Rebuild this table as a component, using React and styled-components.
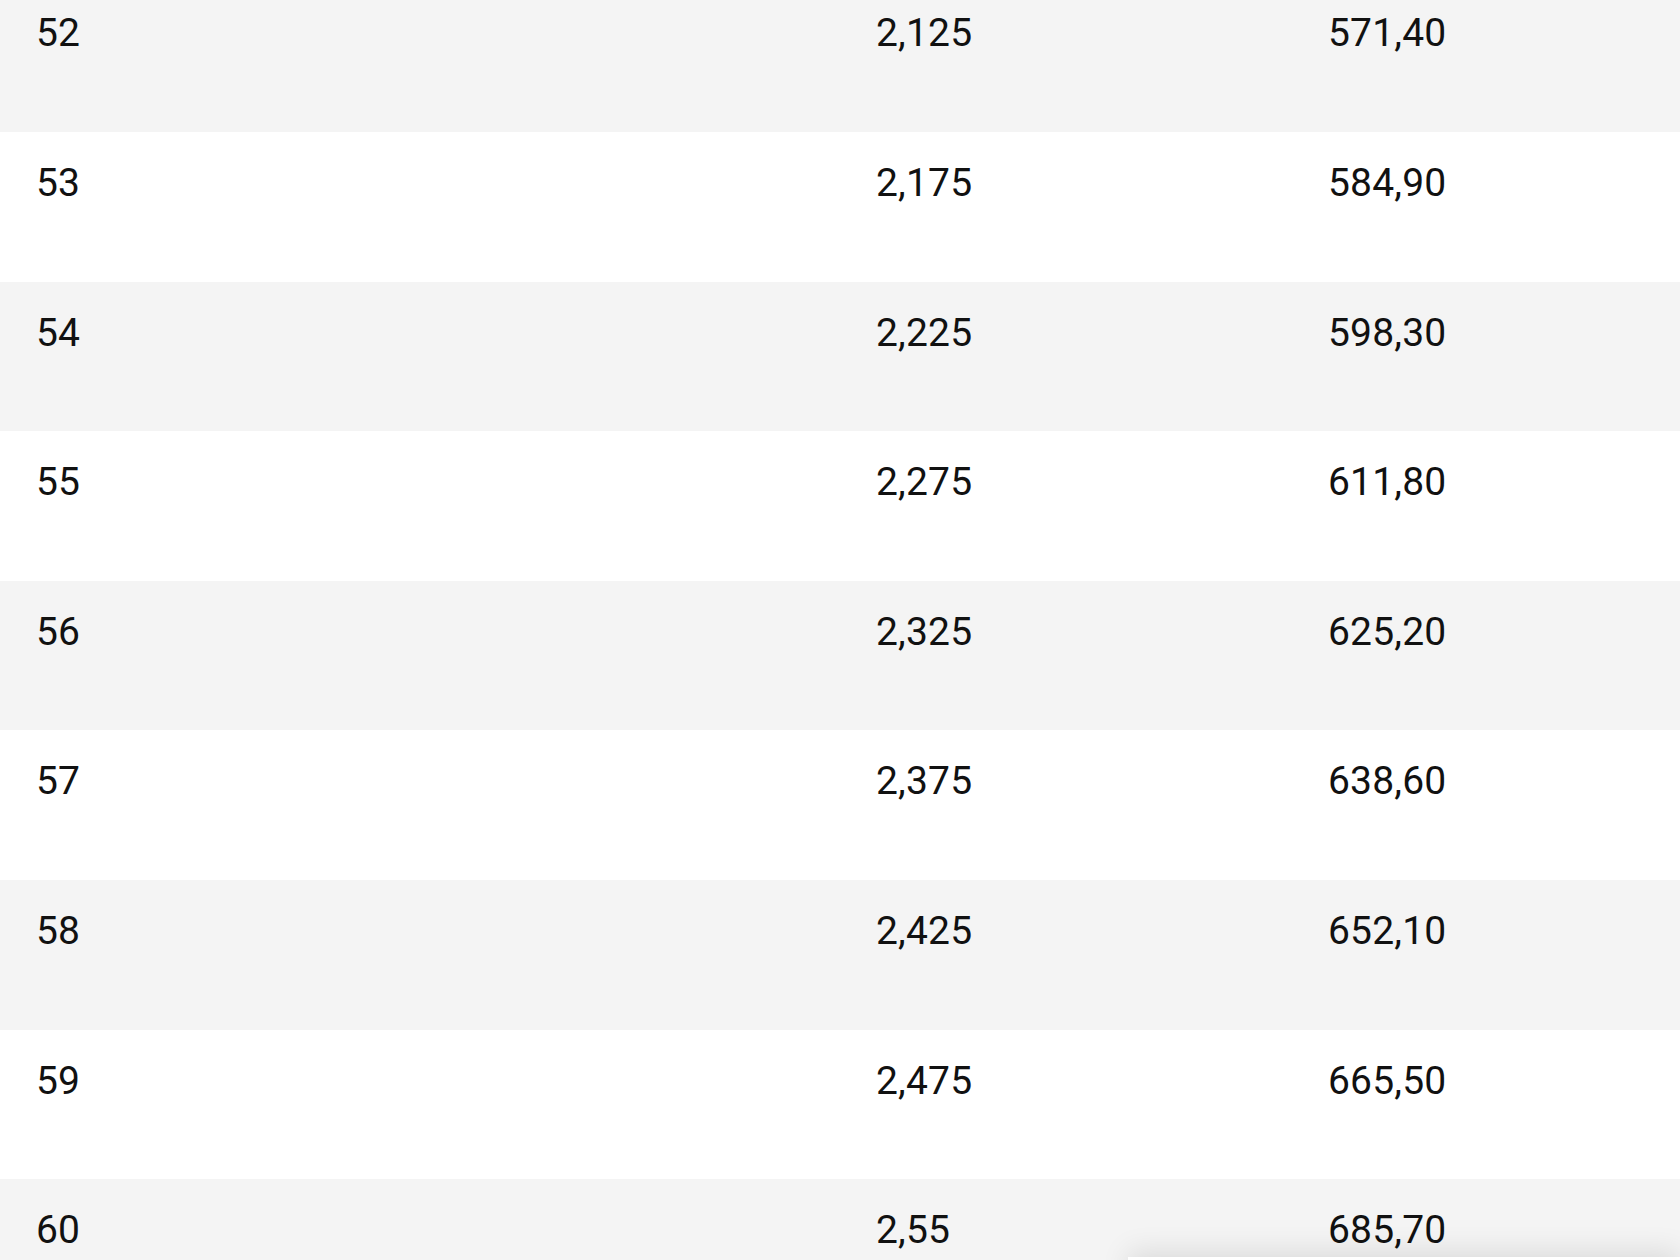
import React from 'react';
import styled, { createGlobalStyle } from 'styled-components';

const GlobalStyle = createGlobalStyle`
  html, body {
    margin: 0;
    padding: 0;
    background: #fff;
    overflow: hidden;
  }
  body {
    font-family: Roboto, "Noto Sans", sans-serif;
    color: #111;
  }
`;

const Table = styled.div`
  margin-top: -17.6px;
  width: 100%;
`;

const Row = styled.div`
  display: grid;
  grid-template-columns: 838px 453px 1fr;
  height: 149.6px;
  background: ${({ striped }) => (striped ? '#f4f4f4' : '#ffffff')};
`;

const Cell = styled.div`
  padding: 27px 0 0 ${({ indent }) => indent}px;
  font-size: 39px;
  line-height: 48px;
  font-weight: 400;
  letter-spacing: 0.2px;
`;

const BottomBar = styled.div`
  position: fixed;
  left: 1128px;
  right: 0;
  top: 1257px;
  height: 80px;
  background: #fff;
  box-shadow: 0 -6px 28px rgba(0, 0, 0, 0.1);
`;

const rows = [
  ['52', '2,125', '571,40'],
  ['53', '2,175', '584,90'],
  ['54', '2,225', '598,30'],
  ['55', '2,275', '611,80'],
  ['56', '2,325', '625,20'],
  ['57', '2,375', '638,60'],
  ['58', '2,425', '652,10'],
  ['59', '2,475', '665,50'],
  ['60', '2,55', '685,70'],
];

export default function App() {
  return (
    <>
      <GlobalStyle />
      <Table>
        {rows.map(([size, factor, price], i) => (
          <Row key={size} striped={i % 2 === 0}>
            <Cell indent={36}>{size}</Cell>
            <Cell indent={38}>{factor}</Cell>
            <Cell indent={37}>{price}</Cell>
          </Row>
        ))}
      </Table>
      <BottomBar />
    </>
  );
}
